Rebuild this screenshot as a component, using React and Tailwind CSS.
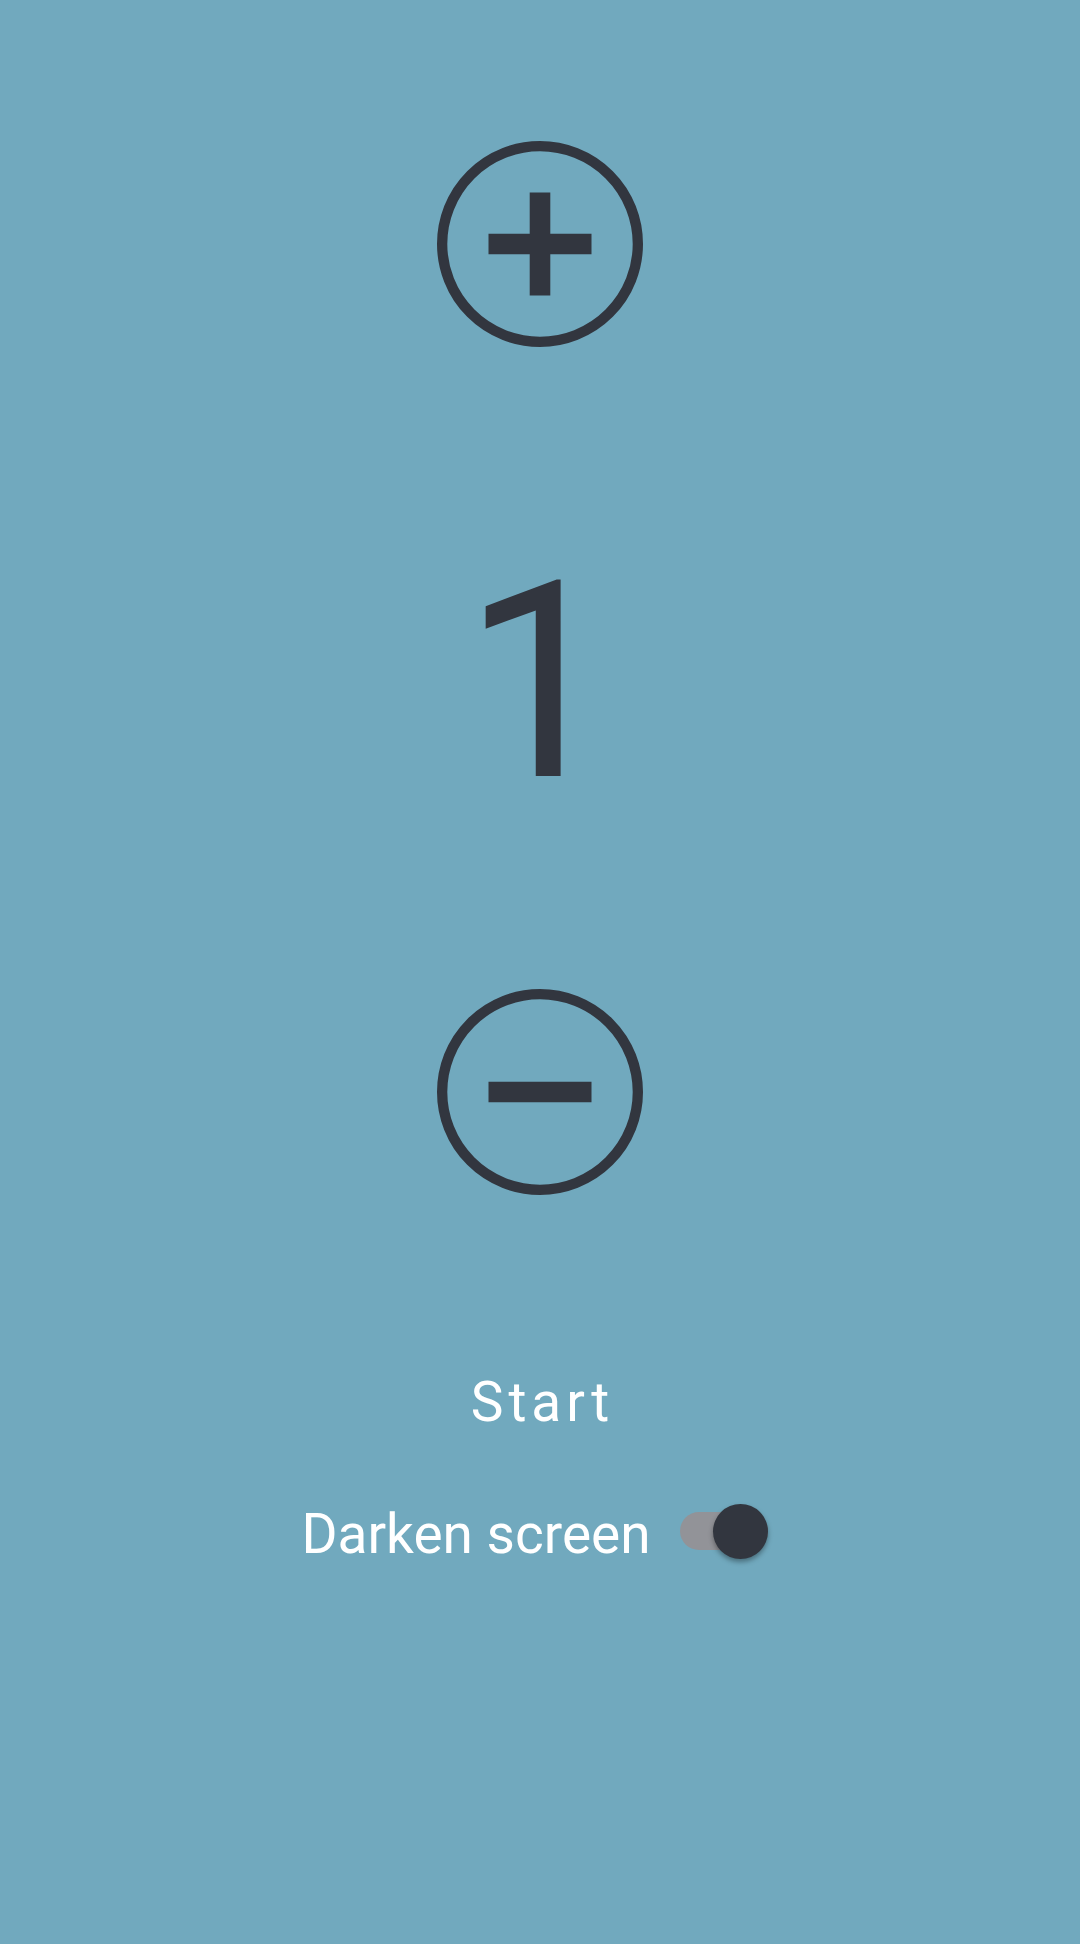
import { useState } from "react";

function RoundButton({ label, onClick, children }) {
  return (
    <button type="button" aria-label={label} onClick={onClick} className="rounded-full">
      <svg viewBox="0 0 20 20" className="block size-[206px]" fill="none" stroke="currentColor">
        <circle cx="10" cy="10" r="9.5" strokeWidth="1" />
        {children}
      </svg>
    </button>
  );
}

export default function App() {
  const [count, setCount] = useState(1);
  const [dark, setDark] = useState(true);
  return (
    <main className="flex min-h-screen flex-col items-center bg-[#71a9be] pt-[141px] font-['Roboto',sans-serif] text-[#32363f]">
      <RoundButton label="Increase" onClick={() => setCount(count + 1)}>
        <path d="M10 5V15M5 10H15" strokeWidth="2" />
      </RoundButton>
      <output className="mt-[170px] mb-[142px] text-[275px] leading-[330px]">{count}</output>
      <RoundButton label="Decrease" onClick={() => setCount(Math.max(1, count - 1))}>
        <path d="M5 10H15" strokeWidth="2" />
      </RoundButton>
      <button type="button" className="mt-[171px] pl-[5px] text-[55px] leading-[72px] tracking-[5px] text-white">
        Start
      </button>
      <label className="mt-[60px] flex items-start gap-[29px] pr-[11px] text-[55px] leading-[72px] text-white">
        Darken screen
        <span className="relative flex h-[66px] w-[88px] items-center">
          <input
            type="checkbox"
            role="switch"
            checked={dark}
            onChange={(e) => setDark(e.target.checked)}
            className="peer h-[38px] w-full appearance-none rounded-full bg-[#929398]"
          />
          <span className="pointer-events-none absolute left-0 size-[55px] rounded-full bg-[#32363f] shadow-[0_3px_5px_rgba(0,0,0,0.35)] peer-checked:left-[33px]" />
        </span>
      </label>
    </main>
  );
}
